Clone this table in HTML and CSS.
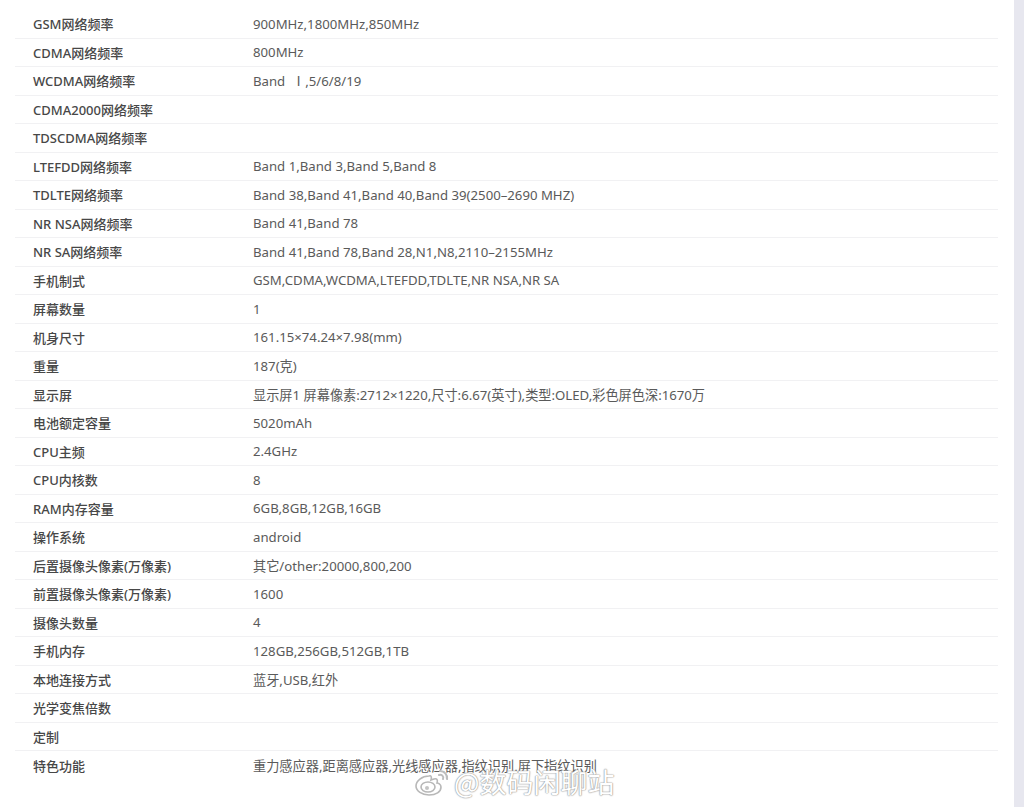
FILE: index.html
```html
<!DOCTYPE html>
<html lang="zh-CN">
<head>
<meta charset="utf-8">
<title>参数</title>
<link rel="stylesheet" href="styles.css">
</head>
<body>
<div class="page">
  <main class="content">
    <div class="spec-table">
      <div class="row"><span class="label">GSM网络频率</span><span class="value">900MHz,1800MHz,850MHz</span></div>
      <div class="row"><span class="label">CDMA网络频率</span><span class="value">800MHz</span></div>
      <div class="row"><span class="label">WCDMA网络频率</span><span class="value">Band &nbsp;Ⅰ,5/6/8/19</span></div>
      <div class="row"><span class="label">CDMA2000网络频率</span><span class="value"></span></div>
      <div class="row"><span class="label">TDSCDMA网络频率</span><span class="value"></span></div>
      <div class="row"><span class="label">LTEFDD网络频率</span><span class="value">Band 1,Band 3,Band 5,Band 8</span></div>
      <div class="row"><span class="label">TDLTE网络频率</span><span class="value">Band 38,Band 41,Band 40,Band 39(2500–2690 MHZ)</span></div>
      <div class="row"><span class="label">NR NSA网络频率</span><span class="value">Band 41,Band 78</span></div>
      <div class="row"><span class="label">NR SA网络频率</span><span class="value">Band 41,Band 78,Band 28,N1,N8,2110–2155MHz</span></div>
      <div class="row"><span class="label">手机制式</span><span class="value">GSM,CDMA,WCDMA,LTEFDD,TDLTE,NR NSA,NR SA</span></div>
      <div class="row"><span class="label">屏幕数量</span><span class="value">1</span></div>
      <div class="row"><span class="label">机身尺寸</span><span class="value">161.15×74.24×7.98(mm)</span></div>
      <div class="row"><span class="label">重量</span><span class="value">187(克)</span></div>
      <div class="row"><span class="label">显示屏</span><span class="value">显示屏1 屏幕像素:2712×1220,尺寸:6.67(英寸),类型:OLED,彩色屏色深:1670万</span></div>
      <div class="row"><span class="label">电池额定容量</span><span class="value">5020mAh</span></div>
      <div class="row"><span class="label">CPU主频</span><span class="value">2.4GHz</span></div>
      <div class="row"><span class="label">CPU内核数</span><span class="value">8</span></div>
      <div class="row"><span class="label">RAM内存容量</span><span class="value">6GB,8GB,12GB,16GB</span></div>
      <div class="row"><span class="label">操作系统</span><span class="value">android</span></div>
      <div class="row"><span class="label">后置摄像头像素(万像素)</span><span class="value">其它/other:20000,800,200</span></div>
      <div class="row"><span class="label">前置摄像头像素(万像素)</span><span class="value">1600</span></div>
      <div class="row"><span class="label">摄像头数量</span><span class="value">4</span></div>
      <div class="row"><span class="label">手机内存</span><span class="value">128GB,256GB,512GB,1TB</span></div>
      <div class="row"><span class="label">本地连接方式</span><span class="value">蓝牙,USB,红外</span></div>
      <div class="row"><span class="label">光学变焦倍数</span><span class="value"></span></div>
      <div class="row"><span class="label">定制</span><span class="value"></span></div>
      <div class="row last"><span class="label">特色功能</span><span class="value">重力感应器,距离感应器,光线感应器,指纹识别,屏下指纹识别</span></div>
    </div>
    <div class="watermark">
      <svg class="wb-logo" width="36" height="30" viewBox="0 0 36 30" aria-hidden="true">
        <path d="M15 9c-7 0-13 5-13 10s6 9 13 9 12-3 12-8c0-3-3-4-4-4 1-3 0-5-3-4l-3 1c1-3 0-5-2-4z" fill="#ffffff" stroke="#b8b8b8" stroke-width="1.6"/>
        <ellipse cx="14" cy="20" rx="7" ry="5" fill="#ffffff" stroke="#b8b8b8" stroke-width="1.6"/>
        <circle cx="13" cy="21" r="2" fill="#c4c4c4"/>
        <path d="M26 4a7 7 0 0 1 7 8" fill="none" stroke="#bdbdbd" stroke-width="2.2" stroke-linecap="round"/>
        <path d="M25 8a3 3 0 0 1 4 4" fill="none" stroke="#bdbdbd" stroke-width="2" stroke-linecap="round"/>
      </svg>
      <span class="wm-text">@数码闲聊站</span>
    </div>
  </main>
  <div class="scroll-strip"></div>
</div>
</body>
</html>
```
FILE: styles.css
```css
html, body {
  margin: 0;
  padding: 0;
  background: #ffffff;
}

body {
  font-family: "Noto Sans", "Noto Sans CJK SC", sans-serif;
  font-size: 13px;
  color: #333333;
}

.page {
  display: flex;
  width: 1024px;
  height: 807px;
  overflow: hidden;
}

.content {
  position: relative;
  flex: 1;
  padding: 10px 16px 0 15px;
}

.spec-table {
  display: flex;
  flex-direction: column;
}

.row {
  display: flex;
  align-items: center;
  height: 28.5px;
  box-sizing: border-box;
  border-bottom: 1px solid #f1f1f3;
}

.row.last {
  border-bottom: none;
}

.label {
  width: 238px;
  padding-left: 18px;
  box-sizing: border-box;
  flex-shrink: 0;
  font-weight: 500;
  color: #474747;
  white-space: nowrap;
}

.value {
  font-size: 13.2px;
  color: #5a5a5a;
  white-space: nowrap;
}

.scroll-strip {
  width: 10px;
  flex-shrink: 0;
  background: #e7e7ef;
}

.watermark {
  position: absolute;
  left: 414px;
  top: 766px;
  display: flex;
  align-items: center;
  gap: 4px;
}

.wm-text {
  font-family: "Noto Sans CJK SC", sans-serif;
  font-size: 27px;
  line-height: 32px;
  color: #ffffff;
  text-shadow: 0 0 1px #9a9a9a, 0 0 1px #9a9a9a, 0 0 2px #b0b0b0;
}
```
